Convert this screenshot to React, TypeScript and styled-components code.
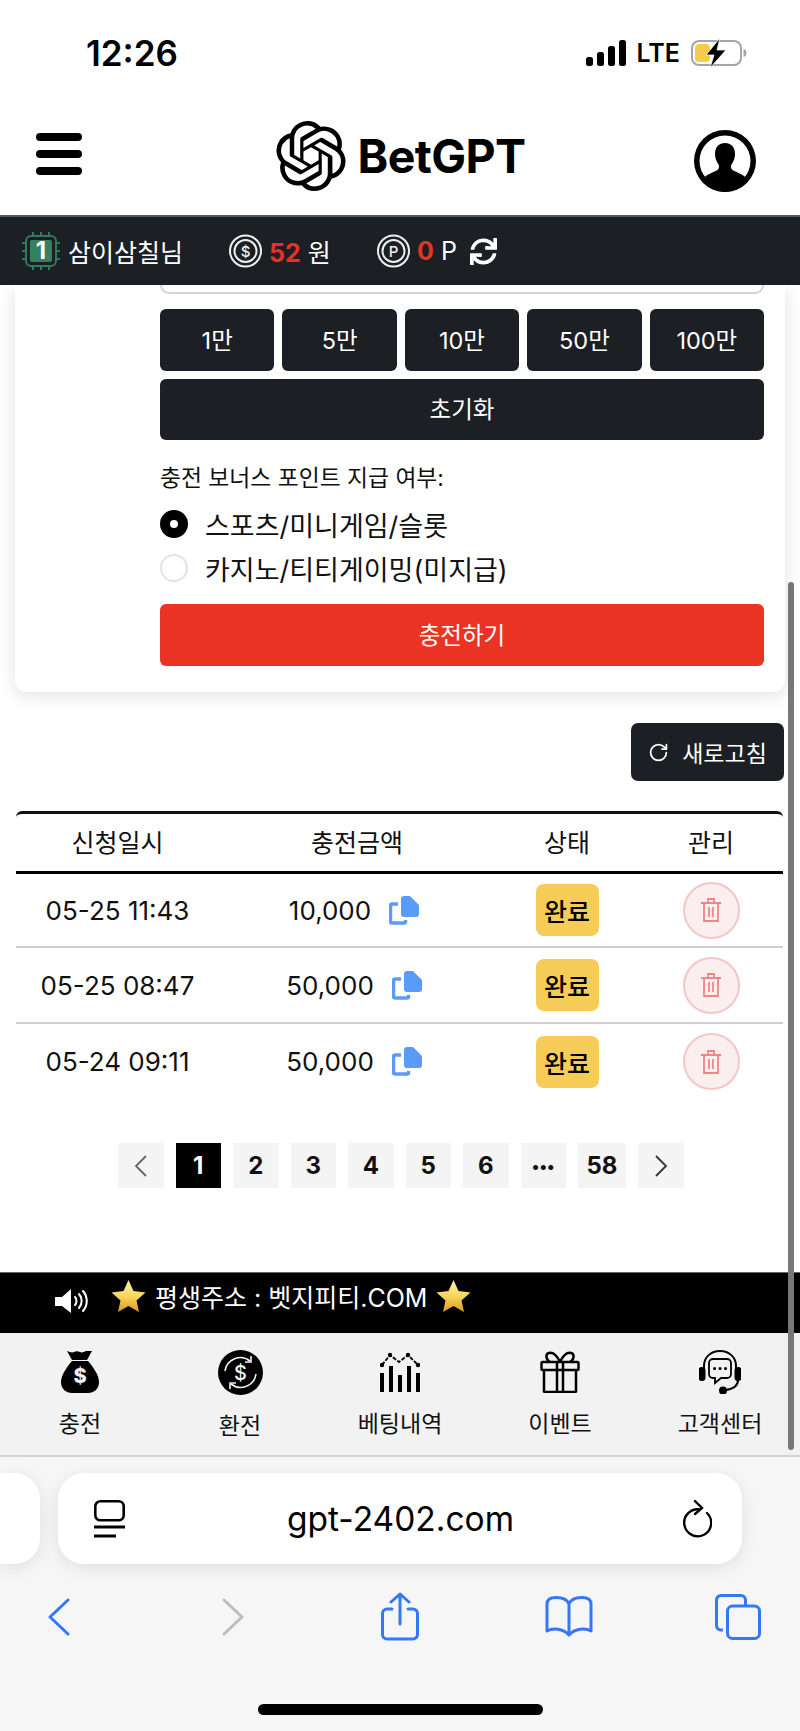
import React from "react";
import styled, { createGlobalStyle } from "styled-components";
import { FaSync } from "react-icons/fa";
import { RotateCw } from "lucide-react";

const Global = createGlobalStyle`
  html, body { margin: 0; padding: 0; background: #fff; overflow: hidden; }
  * { box-sizing: border-box; }
  body { font-family: Inter, "Noto Sans CJK KR", "Noto Sans", sans-serif; color: #111; }
`;

const Screen = styled.div`
  position: relative;
  width: 800px;
  height: 1731px;
  display: flex;
  flex-direction: column;
  overflow: hidden;
  background: #fff;
`;

const StatusBar = styled.div`
  height: 107px;
  flex: none;
  display: flex;
  justify-content: space-between;
  align-items: flex-start;
  padding: 33px 53px 0 86px;
`;
const Clock = styled.div`
  font-size: 35px;
  font-weight: 600;
  line-height: 40px;
  color: #000;
`;
const StatusRight = styled.div`
  display: flex;
  align-items: center;
  gap: 11px;
  height: 40px;
`;
const Lte = styled.span`
  font-size: 25px;
  font-weight: 600;
  color: #000;
`;

const Header = styled.header`
  height: 108px;
  flex: none;
  display: flex;
  align-items: center;
  justify-content: space-between;
  padding: 0 44px 0 36px;
`;
const Burger = styled.div`
  width: 46px;
  display: flex;
  flex-direction: column;
  gap: 9px;
  margin-top: -14px;
`;
const BurgerBar = styled.span`
  height: 8px;
  border-radius: 4px;
  background: #000;
`;
const Logo = styled.div`
  display: flex;
  align-items: center;
  gap: 12px;
  margin-left: 25px;
  margin-top: -10px;
`;
const LogoText = styled.span`
  font-size: 46.5px;
  font-weight: 700;
  color: #000;
  letter-spacing: -0.6px;
`;

const InfoBar = styled.div`
  height: 70px;
  flex: none;
  background: #1c1f24;
  border-top: 2px solid #55585c;
  display: flex;
  align-items: center;
  padding-left: 22px;
  color: #fff;
  font-size: 25px;
`;
const InfoName = styled.span`
  margin-left: 8px;
  width: 161px;
`;
const InfoGroup = styled.div<{ $w: number }>`
  display: flex;
  align-items: center;
  gap: 7px;
  width: ${(p) => p.$w}px;
`;
const Red = styled.span`
  color: #e63226;
  font-weight: 700;
`;
const Spin = styled(FaSync)`
  font-size: 27px;
  margin-left: 8px;
`;

const Content = styled.main`
  flex: 1;
  min-height: 0;
  display: flex;
  flex-direction: column;
`;
const Card = styled.section`
  margin: 0 15px;
  padding: 0 21px 26px 145px;
  background: #fff;
  border-radius: 0 0 12px 12px;
  box-shadow: 0 4px 18px rgba(0, 0, 0, 0.12);
  display: flex;
  flex-direction: column;
`;
const InputStub = styled.div`
  height: 9px;
  border: 2px solid #d4d4d4;
  border-top: none;
  border-radius: 0 0 9px 9px;
`;
const Amounts = styled.div`
  margin-top: 15px;
  display: grid;
  grid-template-columns: repeat(5, 1fr);
  gap: 8px;
`;
const DarkButton = styled.button`
  height: 62px;
  border: none;
  border-radius: 6px;
  background: #1c1f24;
  color: #fff;
  font: inherit;
  font-size: 23.5px;
  padding: 0 0 3px;
`;
const ResetButton = styled(DarkButton)`
  margin-top: 8px;
  height: 61px;
  width: 100%;
`;
const BonusLabel = styled.div`
  margin-top: 22px;
  font-size: 22.8px;
  line-height: 32px;
  color: #111;
`;
const RadioRow = styled.label<{ $first?: boolean }>`
  display: flex;
  align-items: center;
  gap: 17px;
  height: 44px;
  margin-top: ${(p) => (p.$first ? 8 : 0)}px;
  font-size: 27px;
  color: #111;
`;
const RadioDot = styled.span<{ $on?: boolean }>`
  width: 28px;
  height: 28px;
  flex: none;
  border-radius: 50%;
  background: #fff;
  border: ${(p) => (p.$on ? "10px solid #000" : "2px solid #e1e3ea")};
`;
const SubmitButton = styled(DarkButton)`
  margin-top: 14px;
  width: 100%;
  background: #ea3323;
`;

const RefreshRow = styled.div`
  margin-top: 31px;
  padding-right: 16px;
  display: flex;
  justify-content: flex-end;
`;
const RefreshButton = styled.button`
  width: 153px;
  height: 58px;
  border: none;
  border-radius: 7px;
  background: #1c1f24;
  color: #fff;
  font: inherit;
  font-size: 23px;
  display: flex;
  align-items: center;
  justify-content: center;
  gap: 13px;
  padding: 0;
`;
const Table = styled.div`
  margin: 30px 17px 0 16px;
`;
const Row = styled.div<{ $h: number }>`
  display: grid;
  grid-template-columns: 203px 276px 144px 144px;
  align-items: center;
  justify-items: center;
  height: ${(p) => p.$h}px;
  border-bottom: 2px solid #cfcfcf;
  font-size: 26px;
  color: #111;
  &:last-child {
    border-bottom: none;
  }
`;
const HeadRow = styled(Row)`
  border-top: 3px solid #111;
  border-top-left-radius: 6px;
  border-top-right-radius: 6px;
  border-bottom: 3px solid #000;
  font-size: 25px;
  padding-bottom: 3px;
`;
const Amount = styled.div`
  display: flex;
  align-items: center;
  gap: 18px;
  padding-right: 6px;
`;
const Badge = styled.span`
  width: 63px;
  height: 52px;
  border-radius: 8px;
  background: #f5cc57;
  display: flex;
  align-items: center;
  justify-content: center;
  font-size: 25px;
  font-weight: 500;
  color: #000;
`;
const DeleteButton = styled.span`
  width: 57px;
  height: 57px;
  border-radius: 50%;
  background: #faeeee;
  border: 2px solid #f5c6c6;
  display: flex;
  align-items: center;
  justify-content: center;
`;

const Pager = styled.nav`
  margin-top: 44px;
  padding-left: 118px;
  display: flex;
  gap: 12px;
`;
const PageItem = styled.span<{ $active?: boolean; $wide?: boolean; $dots?: boolean }>`
  width: ${(p) => (p.$wide ? 48 : 45.5)}px;
  height: 45px;
  background: ${(p) => (p.$active ? "#000" : "#f4f4f4")};
  color: ${(p) => (p.$active ? "#fff" : "#111")};
  display: flex;
  align-items: center;
  justify-content: center;
  font-size: ${(p) => (p.$dots ? 16 : 24)}px;
  font-weight: 700;
`;
const PagerChevron = styled.svg`
  width: 14px;
  height: 24px;
`;

const Notice = styled.div`
  height: 61px;
  flex: none;
  background: #000;
  border-top: 1px solid #666;
  color: #fff;
  display: flex;
  align-items: center;
  padding: 0 0 14px 55px;
  font-size: 25px;
`;
const NoticeText = styled.span`
  margin: 0 9px;
`;
const Speaker = styled.svg`
  margin: 10px 22px 0 0;
`;

const BottomNav = styled.div`
  height: 124px;
  flex: none;
  background: #f2f2f2;
  border-bottom: 2px solid #d2d2d2;
  display: grid;
  grid-template-columns: repeat(5, 1fr);
`;
const NavItem = styled.div`
  display: flex;
  flex-direction: column;
  align-items: center;
  padding-top: 16px;
  font-size: 23px;
  color: #111;
`;
const NavIcon = styled.div`
  height: 46px;
  display: flex;
  align-items: center;
  justify-content: center;
`;
const NavLabel = styled.span<{ $drop?: boolean }>`
  margin-top: ${(p) => (p.$drop ? 15 : 13)}px;
  line-height: 32px;
`;

const Safari = styled.div`
  height: 274px;
  flex: none;
  background: #f6f6f6;
  display: flex;
  flex-direction: column;
  padding-top: 16px;
`;
const PillRow = styled.div`
  display: flex;
  gap: 18px;
`;
const TabStub = styled.div`
  width: 40px;
  height: 91px;
  background: #fff;
  border-radius: 0 26px 26px 0;
  box-shadow: 0 4px 18px rgba(0, 0, 0, 0.09);
`;
const UrlPill = styled.div`
  width: 684px;
  height: 91px;
  background: #fff;
  border-radius: 26px;
  box-shadow: 0 4px 18px rgba(0, 0, 0, 0.09);
  display: flex;
  align-items: center;
  justify-content: space-between;
  padding: 0 30px 0 36px;
`;
const UrlText = styled.span`
  font-size: 33.5px;
  color: #000;
  margin-right: 6px;
`;
const Toolbar = styled.div`
  margin-top: 28px;
  display: grid;
  grid-template-columns: 118px 230px 104px 234px 104px;
  justify-items: center;
  align-items: center;
  height: 48px;
`;
const HomeBar = styled.div`
  width: 285px;
  height: 11px;
  border-radius: 6px;
  background: #000;
  margin: 64px auto 0;
`;
const ScrollThumb = styled.div`
  position: absolute;
  left: 788px;
  top: 582px;
  width: 6px;
  height: 868px;
  border-radius: 3px;
  background: #777;
`;

const OPENAI =
  "M22.2819 9.8211a5.9847 5.9847 0 0 0-.5157-4.9108 6.0462 6.0462 0 0 0-6.5098-2.9A6.0651 6.0651 0 0 0 4.9807 4.1818a5.9847 5.9847 0 0 0-3.9977 2.9 6.0462 6.0462 0 0 0 .7427 7.0966 5.98 5.98 0 0 0 .511 4.9107 6.051 6.051 0 0 0 6.5146 2.9001A5.9847 5.9847 0 0 0 13.2599 24a6.0557 6.0557 0 0 0 5.7718-4.2058 5.9894 5.9894 0 0 0 3.9977-2.9001 6.0557 6.0557 0 0 0-.7475-7.0729zm-9.022 12.6081a4.4755 4.4755 0 0 1-2.8764-1.0408l.1419-.0804 4.7783-2.7582a.7948.7948 0 0 0 .3927-.6813v-6.7369l2.02 1.1686a.071.071 0 0 1 .038.052v5.5826a4.504 4.504 0 0 1-4.4945 4.4944zm-9.6607-4.1254a4.4708 4.4708 0 0 1-.5346-3.0137l.142.0852 4.783 2.7582a.7712.7712 0 0 0 .7806 0l5.8428-3.3685v2.3324a.0804.0804 0 0 1-.0332.0615L9.74 19.9502a4.4992 4.4992 0 0 1-6.1408-1.6464zM2.3408 7.8956a4.485 4.485 0 0 1 2.3655-1.9728V11.6a.7664.7664 0 0 0 .3879.6765l5.8144 3.3543-2.0201 1.1685a.0757.0757 0 0 1-.071 0l-4.8303-2.7865A4.504 4.504 0 0 1 2.3408 7.872zm16.5963 3.8558L13.1038 8.364 15.1192 7.2a.0757.0757 0 0 1 .071 0l4.8303 2.7913a4.4944 4.4944 0 0 1-.6765 8.1042v-5.6772a.79.79 0 0 0-.407-.667zm2.0107-3.0231l-.142-.0852-4.7735-2.7818a.7759.7759 0 0 0-.7854 0L9.409 9.2297V6.8974a.0662.0662 0 0 1 .0284-.0615l4.8303-2.7866a4.4992 4.4992 0 0 1 6.6802 4.66zM8.3065 12.863l-2.02-1.1638a.0804.0804 0 0 1-.038-.0567V6.0742a4.4992 4.4992 0 0 1 7.3757-3.4537l-.142.0805L8.704 5.459a.7948.7948 0 0 0-.3927.6813zm1.0976-2.3654l2.602-1.4998 2.6069 1.4998v2.9994l-2.5974 1.4997-2.6067-1.4997Z";

const Signal = () => (
  <svg width="40" height="26" viewBox="0 0 40 26">
    <rect x="0" y="17" width="7" height="9" rx="2.5" fill="#000" />
    <rect x="11" y="12" width="7" height="14" rx="2.5" fill="#000" />
    <rect x="22" y="6" width="7" height="20" rx="2.5" fill="#000" />
    <rect x="33" y="0" width="7" height="26" rx="2.5" fill="#000" />
  </svg>
);
const Battery = () => (
  <svg width="56" height="30" viewBox="0 0 56 30">
    <rect x="1" y="3" width="49" height="24" rx="7" fill="none" stroke="#a5a5a5" strokeWidth="2" />
    <rect x="4" y="6" width="15" height="18" rx="4" fill="#f5cb4c" />
    <path d="M52.5 11c2 .6 3 2 3 4s-1 3.400-3 4z" fill="#a5a5a5" />
    <path d="M29 0 15 17h8l-4 13 16-18h-9z" fill="#000" stroke="#fff" strokeWidth="0.800" />
  </svg>
);
const Avatar = () => (
  <svg width="62" height="62" viewBox="0 0 62 62">
    <circle cx="31" cy="31" r="31" fill="#000" />
    <circle cx="31" cy="31" r="25.500" fill="#fff" />
    <path d="M31 13c-7 0-10 5-10 11 0 4 1.500 8 3.500 10.500 1 1.500.5 4.500-1 5.500-3 2-10 3.500-14 8.500A25.500 25.500 0 0 0 31 62a28 28 0 0 0 21.500-13.500c-4-5-11-6.500-14-8.500-1.500-1-2-4-1-5.500C39.500 32 41 28 41 24c0-6-3-11-10-11z" fill="#000" />
  </svg>
);
const Grade = () => (
  <svg width="38" height="38" viewBox="0 0 38 38">
    <g stroke="#2d7a5d" strokeWidth="2">
      <path d="M11 0v6M19 0v6M27 0v6M11 32v6M19 32v6M27 32v6M0 11h6M0 19h6M0 27h6M32 11h6M32 19h6M32 27h6" />
    </g>
    <rect x="4" y="4" width="30" height="30" rx="5" fill="#1c1f24" stroke="#2d7a5d" strokeWidth="2" />
    <rect x="8" y="8" width="22" height="22" rx="2" fill="#36805f" />
    <text x="19" y="27" textAnchor="middle" fontSize="24" fontWeight="700" fill="#fff" fontFamily="Inter">1</text>
  </svg>
);
const Coin = ({ ch }: { ch: string }) => (
  <svg width="33" height="34" viewBox="0 0 33 34">
    <circle cx="16.500" cy="17" r="15.500" fill="none" stroke="#eee" strokeWidth="2" />
    <circle cx="16.500" cy="17" r="11" fill="none" stroke="#eee" strokeWidth="2" />
    <text x="16.500" y="22.500" textAnchor="middle" fontSize="15" fontWeight="500" fill="#eee" fontFamily="Inter">{ch}</text>
  </svg>
);
const CopyIcon = () => (
  <svg width="30" height="29" viewBox="0 0 30 29">
    <path d="M12 0h9l9 9v9a3 3 0 0 1-3 3H15a3 3 0 0 1-3-3V3a3 3 0 0 1 3-3z" fill="#5b9bf8" />
    <path d="M9 8H3a1.500 1.500 0 0 0-1.500 1.500v16A1.500 1.500 0 0 0 3 27h12a1.500 1.500 0 0 0 1.500-1.500V24" fill="none" stroke="#5b9bf8" strokeWidth="3.500" />
  </svg>
);
const TrashIcon = () => (
  <svg width="20" height="24" viewBox="0 0 20 24" fill="none" stroke="#ef8686" strokeWidth="1.800">
    <path d="M0 5h20M7 5V1h6v4M3 5v18h14V5M8 9v10M12 9v10" />
  </svg>
);
const Star = () => (
  <svg width="35" height="32" viewBox="0 0 35 32">
    <defs>
      <linearGradient id="star" x1="0" y1="0" x2="0" y2="1">
        <stop offset="0" stopColor="#fff2a8" />
        <stop offset="0.5" stopColor="#f9d65a" />
        <stop offset="1" stopColor="#d99a22" />
      </linearGradient>
    </defs>
    <path d="M17.500 0 22.500 11 34.500 12.500 25.500 20.500 28 32 17.500 26 7 32 9.500 20.500.5 12.500 12.500 11z" fill="url(#star)" />
  </svg>
);
const BagIcon = () => (
  <svg width="38" height="42" viewBox="0 0 38 42">
    <path d="M6 0c3 1 5 2 7 1s4-1 6 0 4 0 6-1 4 0 6 0l-5 9H11z" fill="#000" />
    <path d="M11 10h16c5 6 11 14 11 21 0 7-5 11-11 11H11C5 42 0 38 0 31c0-7 6-15 11-21z" fill="#000" />
    <text x="19" y="32" textAnchor="middle" fontSize="20" fontWeight="800" fill="#f2f2f2" fontFamily="Inter">$</text>
  </svg>
);
const ExchangeIcon = () => (
  <svg width="45" height="45" viewBox="0 0 45 45">
    <circle cx="22.500" cy="22.500" r="22.500" fill="#000" />
    <path d="M7 21a15.500 15.500 0 0 1 25-10M38 24a15.500 15.500 0 0 1-25 10" fill="none" stroke="#f2f2f2" strokeWidth="1.600" />
    <path d="M33 6v6h-6M12 39v-6h6" fill="none" stroke="#f2f2f2" strokeWidth="1.600" />
    <text x="22.500" y="29.500" textAnchor="middle" fontSize="20" fontWeight="500" fill="#f2f2f2" fontFamily="Inter">$</text>
  </svg>
);
const ChartIcon = () => (
  <svg width="40" height="40" viewBox="0 0 40 40" fill="#000">
    <rect x="0" y="21" width="4" height="19" />
    <rect x="9" y="14" width="4" height="26" />
    <rect x="18" y="23" width="4" height="17" />
    <rect x="27" y="14" width="4" height="26" />
    <rect x="36" y="21" width="4" height="19" />
    <path d="M2 13 10 3 19 10 28 3 38 13" fill="none" stroke="#000" strokeWidth="1.800" strokeDasharray="4 1.500" />
    <circle cx="2" cy="13" r="2.200" />
    <circle cx="10" cy="3" r="2.200" />
    <circle cx="28" cy="3" r="2.200" />
    <circle cx="38" cy="13" r="2.200" />
  </svg>
);
const GiftIcon = () => (
  <svg width="40" height="42" viewBox="0 0 40 42" fill="none" stroke="#000" strokeWidth="2.500">
    <rect x="1.500" y="11" width="37" height="8" rx="1" />
    <path d="M4 19v21a1 1 0 0 0 1 1h30a1 1 0 0 0 1-1V19M17 11v30M23 11v30" />
    <path d="M20 11C17 5 13 1 9 2c-4 1-3 7 1 9M20 11c3-6 7-10 11-9 4 1 3 7-1 9" />
  </svg>
);
const HeadsetIcon = () => (
  <svg width="42" height="44" viewBox="0 0 42 44" fill="none" stroke="#000" strokeWidth="2">
    <path d="M5 20V16C5 7 12 1 21 1s16 6 16 15v4" />
    <rect x="0.500" y="18" width="5" height="12" rx="2.500" fill="#000" />
    <rect x="36.500" y="18" width="5" height="12" rx="2.500" fill="#000" />
    <path d="M14 9h14a4 4 0 0 1 4 4v11a4 4 0 0 1-4 4h-6l-6 5v-5h-2a4 4 0 0 1-4-4V13a4 4 0 0 1 4-4z" strokeWidth="1.800" />
    <path d="M15.500 18.500h.1M21 18.500h.1M26.500 18.500h.1" strokeWidth="3" strokeLinecap="round" />
    <path d="M39 30c0 6-5 9-12 10" />
    <circle cx="24" cy="40.500" r="3" fill="#000" />
  </svg>
);
const TabsIcon = () => (
  <svg width="31" height="38" viewBox="0 0 31 38" fill="none" stroke="#000" strokeWidth="2.600">
    <rect x="1.300" y="1.300" width="28.400" height="19" rx="5" />
    <path d="M0 27h31" strokeWidth="3" />
    <path d="M0 36h22" strokeWidth="3" />
  </svg>
);
const ReloadIcon = () => (
  <svg width="30" height="38" viewBox="0 0 30 38" fill="none" stroke="#000" strokeWidth="2.400" strokeLinecap="round">
    <path d="M18 9.500A13.500 13.500 0 1 0 25 13" />
    <path d="M13 1l7 7-7 6" />
  </svg>
);
const Chevron = ({ flip, color }: { flip?: boolean; color: string }) => (
  <svg width="22" height="38" viewBox="0 0 22 38" fill="none" stroke={color} strokeWidth="3" strokeLinecap="round" strokeLinejoin="round">
    <path d={flip ? "M2 2l18 17L2 36" : "M20 2 2 19l18 17"} />
  </svg>
);
const PageArrow = ({ flip, color }: { flip?: boolean; color: string }) => (
  <PagerChevron viewBox="0 0 14 24" fill="none" stroke={color} strokeWidth="1.800">
    <path d={flip ? "M2 2l10 10L2 22" : "M12 2 2 12l10 10"} />
  </PagerChevron>
);
const ShareIcon = () => (
  <svg width="38" height="49" viewBox="0 0 38 49" fill="none" stroke="#3478f6" strokeWidth="3" strokeLinecap="round" strokeLinejoin="round">
    <path d="M11 17H6a4.500 4.500 0 0 0-4.500 4.500v21A4.500 4.500 0 0 0 6 47h26a4.500 4.500 0 0 0 4.500-4.500v-21A4.500 4.500 0 0 0 32 17h-5" />
    <path d="M19 32V2M10 10l9-8 9 8" />
  </svg>
);
const BookIcon = () => (
  <svg width="48" height="41" viewBox="0 0 48 41" fill="none" stroke="#3478f6" strokeWidth="3" strokeLinecap="round" strokeLinejoin="round">
    <path d="M24 8C22 3 17 1.500 11 1.500 5 1.500 2 4 2 8v27c5-3 16-3 22 4 6-7 17-7 22-4V8c0-4-3-6.500-9-6.500S26 3 24 8zM24 8v31" />
  </svg>
);
const PagesIcon = () => (
  <svg width="46" height="46" viewBox="0 0 46 46" fill="none" stroke="#3478f6" strokeWidth="3">
    <path d="M8 36H6a4.500 4.500 0 0 1-4.500-4.500V6A4.500 4.500 0 0 1 6 1.500h20A4.500 4.500 0 0 1 30.500 6v6" />
    <rect x="12.500" y="12" width="32" height="32.500" rx="5" />
  </svg>
);
const SpeakerIcon = () => (
  <Speaker width="34" height="26" viewBox="0 0 34 26" fill="none" stroke="#fff" strokeWidth="2" strokeLinecap="round">
    <path d="M0 9h7l9-8v24l-9-7H0z" fill="#fff" stroke="none" />
    <path d="M20 9c2 2 2 6 0 8M24 6c3.500 4 3.500 10 0 14M28 3c5 6 5 14 0 20" />
  </Speaker>
);

const rows = [
  { date: "05-25 11:43", amount: "10,000", h: 74 },
  { date: "05-25 08:47", amount: "50,000", h: 76 },
  { date: "05-24 09:11", amount: "50,000", h: 75 },
];
const amounts = ["1만", "5만", "10만", "50만", "100만"];
const pages = ["1", "2", "3", "4", "5", "6", "•••", "58"];

export default function App() {
  return (
    <Screen>
      <Global />
      <StatusBar>
        <Clock>12:26</Clock>
        <StatusRight>
          <Signal />
          <Lte>LTE</Lte>
          <Battery />
        </StatusRight>
      </StatusBar>
      <Header>
        <Burger>
          <BurgerBar />
          <BurgerBar />
          <BurgerBar />
        </Burger>
        <Logo>
          <svg width="70" height="70" viewBox="0 0 24 24" fill="#000">
            <path d={OPENAI} />
          </svg>
          <LogoText>BetGPT</LogoText>
        </Logo>
        <Avatar />
      </Header>
      <InfoBar>
        <Grade />
        <InfoName>삼이삼칠님</InfoName>
        <InfoGroup $w={148}>
          <Coin ch="$" />
          <span>
            <Red>52</Red> 원
          </span>
        </InfoGroup>
        <InfoGroup $w={85}>
          <Coin ch="P" />
          <span>
            <Red>0</Red> P
          </span>
        </InfoGroup>
        <Spin />
      </InfoBar>
      <Content>
        <Card>
          <InputStub />
          <Amounts>
            {amounts.map((a) => (
              <DarkButton key={a}>{a}</DarkButton>
            ))}
          </Amounts>
          <ResetButton>초기화</ResetButton>
          <BonusLabel>충전 보너스 포인트 지급 여부:</BonusLabel>
          <RadioRow $first>
            <RadioDot $on />
            스포츠/미니게임/슬롯
          </RadioRow>
          <RadioRow>
            <RadioDot />
            카지노/티티게이밍(미지급)
          </RadioRow>
          <SubmitButton>충전하기</SubmitButton>
        </Card>
        <RefreshRow>
          <RefreshButton>
            <RotateCw size={21} />
            새로고침
          </RefreshButton>
        </RefreshRow>
        <Table>
          <HeadRow $h={63}>
            <span>신청일시</span>
            <span>충전금액</span>
            <span>상태</span>
            <span>관리</span>
          </HeadRow>
          {rows.map((r) => (
            <Row key={r.date} $h={r.h}>
              <span>{r.date}</span>
              <Amount>
                {r.amount}
                <CopyIcon />
              </Amount>
              <Badge>완료</Badge>
              <DeleteButton>
                <TrashIcon />
              </DeleteButton>
            </Row>
          ))}
        </Table>
        <Pager>
          <PageItem>
            <PageArrow color="#666" />
          </PageItem>
          {pages.map((p, i) => (
            <PageItem key={p} $active={i === 0} $wide={p === "58"} $dots={p === "•••"}>
              {p}
            </PageItem>
          ))}
          <PageItem>
            <PageArrow flip color="#333" />
          </PageItem>
        </Pager>
      </Content>
      <Notice>
        <SpeakerIcon />
        <Star />
        <NoticeText>평생주소 : 벳지피티.COM</NoticeText>
        <Star />
      </Notice>
      <BottomNav>
        <NavItem>
          <NavIcon>
            <BagIcon />
          </NavIcon>
          <NavLabel>충전</NavLabel>
        </NavItem>
        <NavItem>
          <NavIcon>
            <ExchangeIcon />
          </NavIcon>
          <NavLabel $drop>환전</NavLabel>
        </NavItem>
        <NavItem>
          <NavIcon>
            <ChartIcon />
          </NavIcon>
          <NavLabel>베팅내역</NavLabel>
        </NavItem>
        <NavItem>
          <NavIcon>
            <GiftIcon />
          </NavIcon>
          <NavLabel>이벤트</NavLabel>
        </NavItem>
        <NavItem>
          <NavIcon>
            <HeadsetIcon />
          </NavIcon>
          <NavLabel>고객센터</NavLabel>
        </NavItem>
      </BottomNav>
      <Safari>
        <PillRow>
          <TabStub />
          <UrlPill>
            <TabsIcon />
            <UrlText>gpt-2402.com</UrlText>
            <ReloadIcon />
          </UrlPill>
        </PillRow>
        <Toolbar>
          <Chevron color="#3478f6" />
          <Chevron flip color="#bdbdbd" />
          <ShareIcon />
          <BookIcon />
          <PagesIcon />
        </Toolbar>
        <HomeBar />
      </Safari>
      <ScrollThumb />
    </Screen>
  );
}
